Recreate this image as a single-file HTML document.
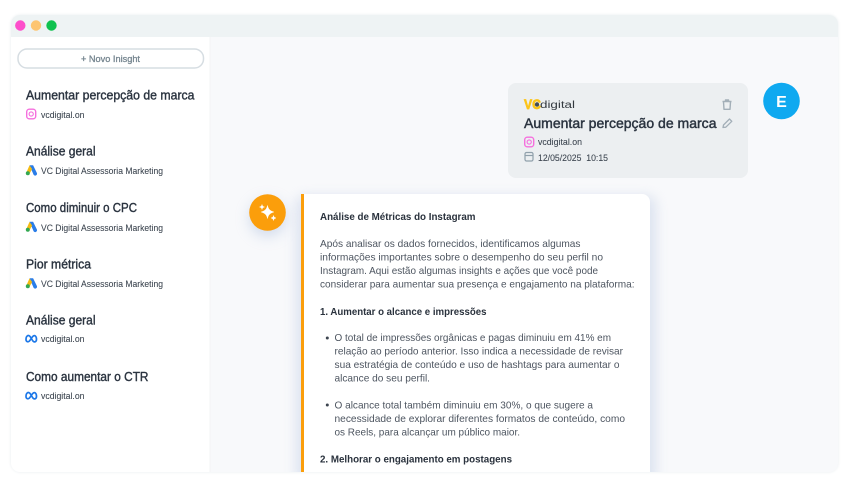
<!DOCTYPE html>
<html lang="pt">
<head>
<meta charset="utf-8">
<title>Insights</title>
<style>
html,body{margin:0;padding:0;background:#fff;width:848px;height:487px;overflow:hidden}
svg{display:block;filter:blur(.3px)}
text{font-family:"Liberation Sans","DejaVu Sans",sans-serif;white-space:pre}
.t{font-size:12.5px;fill:#2b3440;stroke:#2b3440;stroke-width:.38}
.s{font-size:9px;fill:#3a434e;stroke:#3a434e;stroke-width:.06}
.b{font-size:10.4px;fill:#4d5560}
.h{font-size:10.4px;font-weight:bold;fill:#2a323d}
</style>
</head>
<body>
<svg width="848" height="487" viewBox="0 0 848 487" xmlns="http://www.w3.org/2000/svg">
<defs>
<filter id="f" x="-10%" y="-10%" width="120%" height="120%"><feGaussianBlur stdDeviation="1.2"/></filter>
<filter id="cs" x="-15%" y="-15%" width="130%" height="130%"><feGaussianBlur stdDeviation="6"/></filter>
<filter id="as" x="-60%" y="-60%" width="220%" height="220%"><feGaussianBlur stdDeviation="7"/></filter>
<clipPath id="fc"><rect x="11" y="15" width="827" height="457" rx="9"/></clipPath>
<g id="ig" fill="none"><rect x=".7" y=".7" width="9" height="9.6" rx="2.6" stroke="#f56fde" stroke-width="1.4"/><circle cx="5.200" cy="5.500" r="2.100" stroke="#f56fde" stroke-width="1.100"/></g>
<g id="ads"><path d="M3.800 0.300 L7.400 0.300 L11.200 8 A1.900 1.900 0 0 1 7.900 9.800 Z" fill="#2a7de8"/><path d="M3.800 .4 L6.400 4 L3.600 9.200 L.6 7.600 Z" fill="#f5bb12"/><circle cx="2.100" cy="8.300" r="2" fill="#33a852"/></g>
<g id="meta" fill="none" stroke="#1d78e8" stroke-width="1.700"><path d="M1 5.400 C1 1.800 3.200 .7 4.800 2.200 C6 3.400 7 5.900 8 7.100 C9.400 8.700 11.500 7.800 11.500 5.200 C11.500 2.200 9.600 .7 8 2.200 C6.600 3.500 5.500 6 4.300 7.100 C2.900 8.300 1 7.800 1 5.400 Z"/></g>
</defs>

<rect width="848" height="487" fill="#fff"/>
<rect x="10.500" y="14.500" width="828" height="458" rx="10" fill="#eef1f3" filter="url(#f)"/>
<g clip-path="url(#fc)">
<rect x="11" y="15" width="827" height="457" fill="#f8f9fb"/>
<rect x="11" y="15" width="827" height="22" fill="#eef3f4"/>
<rect x="11" y="37" width="199" height="435" fill="#fff"/>
<rect x="209.500" y="37" width="1" height="435" fill="#f3f4f6"/>

<!-- answer card -->
<rect x="296" y="196" width="360" height="290" rx="8" fill="#b4c3e0" opacity=".4" filter="url(#cs)"/>
<path d="M302 194 H642 A8 8 0 0 1 650 202 V472 H302 Z" fill="#fff"/>
<rect x="301" y="194" width="3" height="278" fill="#fb9e0b"/>
<text class="h" x="320" y="220" textLength="155.500" lengthAdjust="spacingAndGlyphs">Análise de Métricas do Instagram</text>
<text class="b" x="320" y="247" textLength="260.500" lengthAdjust="spacingAndGlyphs">Após analisar os dados fornecidos, identificamos algumas</text>
<text class="b" x="320" y="260.500" textLength="283" lengthAdjust="spacingAndGlyphs">informações importantes sobre o desempenho do seu perfil no</text>
<text class="b" x="320" y="274" textLength="278" lengthAdjust="spacingAndGlyphs">Instagram. Aqui estão algumas insights e ações que você pode</text>
<text class="b" x="320" y="287.500" textLength="314.500" lengthAdjust="spacingAndGlyphs">considerar para aumentar sua presença e engajamento na plataforma:</text>
<text class="h" x="320" y="315" textLength="166.500" lengthAdjust="spacingAndGlyphs">1. Aumentar o alcance e impressões</text>
<circle cx="327.300" cy="338" r="1.500" fill="#3d4550"/>
<text class="b" x="334.500" y="341" textLength="276.500" lengthAdjust="spacingAndGlyphs">O total de impressões orgânicas e pagas diminuiu em 41% em</text>
<text class="b" x="334.500" y="354.500" textLength="288.500" lengthAdjust="spacingAndGlyphs">relação ao período anterior. Isso indica a necessidade de revisar</text>
<text class="b" x="334.500" y="368" textLength="285" lengthAdjust="spacingAndGlyphs">sua estratégia de conteúdo e uso de hashtags para aumentar o</text>
<text class="b" x="334.500" y="381.500" textLength="95.500" lengthAdjust="spacingAndGlyphs">alcance do seu perfil.</text>
<circle cx="327.300" cy="405" r="1.500" fill="#3d4550"/>
<text class="b" x="334.500" y="408.500" textLength="258.500" lengthAdjust="spacingAndGlyphs">O alcance total também diminuiu em 30%, o que sugere a</text>
<text class="b" x="334.500" y="422" textLength="290.500" lengthAdjust="spacingAndGlyphs">necessidade de explorar diferentes formatos de conteúdo, como</text>
<text class="b" x="334.500" y="435.500" textLength="185.500" lengthAdjust="spacingAndGlyphs">os Reels, para alcançar um público maior.</text>
<text class="h" x="320" y="462.500" textLength="192" lengthAdjust="spacingAndGlyphs">2. Melhorar o engajamento em postagens</text>
</g>

<!-- traffic lights -->
<circle cx="20.300" cy="25.500" r="5.200" fill="#fd4ecb"/>
<circle cx="36" cy="25.500" r="5.200" fill="#fdc571"/>
<circle cx="51.500" cy="25.500" r="5.200" fill="#10c24f"/>

<!-- new insight -->
<rect x="18" y="49" width="185.500" height="19" rx="9" fill="#fff" stroke="#d6dde2" stroke-width="1.500"/>
<text x="81" y="62" font-size="9" fill="#75858f" stroke="#75858f" stroke-width=".3" textLength="59" lengthAdjust="spacingAndGlyphs">+ Novo Inisght</text>

<!-- sidebar -->
<text class="t" x="26" y="99.500" textLength="168.500" lengthAdjust="spacingAndGlyphs">Aumentar percepção de marca</text>
<use href="#ig" x="26" y="108.500"/>
<text class="s" x="41" y="118" textLength="43.500" lengthAdjust="spacingAndGlyphs">vcdigital.on</text>

<text class="t" x="26" y="155.500" textLength="69.500" lengthAdjust="spacingAndGlyphs">Análise geral</text>
<use href="#ads" x="25.700" y="165"/>
<text class="s" x="41" y="174" textLength="122" lengthAdjust="spacingAndGlyphs">VC Digital Assessoria Marketing</text>

<text class="t" x="26" y="212" textLength="111" lengthAdjust="spacingAndGlyphs">Como diminuir o CPC</text>
<use href="#ads" x="25.700" y="221.500"/>
<text class="s" x="41" y="231" textLength="122" lengthAdjust="spacingAndGlyphs">VC Digital Assessoria Marketing</text>

<text class="t" x="26" y="268.500" textLength="65" lengthAdjust="spacingAndGlyphs">Pior métrica</text>
<use href="#ads" x="25.700" y="278"/>
<text class="s" x="41" y="287" textLength="122" lengthAdjust="spacingAndGlyphs">VC Digital Assessoria Marketing</text>

<text class="t" x="26" y="324.500" textLength="69.500" lengthAdjust="spacingAndGlyphs">Análise geral</text>
<use href="#meta" x="25" y="334"/>
<text class="s" x="41" y="342" textLength="43.500" lengthAdjust="spacingAndGlyphs">vcdigital.on</text>

<text class="t" x="26" y="381" textLength="122.500" lengthAdjust="spacingAndGlyphs">Como aumentar o CTR</text>
<use href="#meta" x="25" y="391"/>
<text class="s" x="41" y="399" textLength="43.500" lengthAdjust="spacingAndGlyphs">vcdigital.on</text>

<!-- user message -->
<rect x="508" y="83" width="240" height="95" rx="8" fill="#eceff1"/>
<text x="524" y="109" font-size="14" font-weight="bold" fill="#fcc419" stroke="#fcc419" stroke-width=".7" textLength="17" lengthAdjust="spacingAndGlyphs">VC</text>
<circle cx="537" cy="104.500" r="2.200" fill="#444b52"/>
<text x="540" y="108" font-size="10" fill="#33393f" textLength="35" lengthAdjust="spacingAndGlyphs">digital</text>
<g fill="none" stroke="#a3afb8" stroke-width="1.400" stroke-linejoin="round">
<path d="M722.500 101.500 H731.500 M725.500 101.500 V100 H728.500 V101.500"/>
<path d="M723.500 101.800 L724 109.300 H730 L730.500 101.800"/>
</g>
<text x="524" y="128" font-size="14" fill="#2b3440" stroke="#2b3440" stroke-width=".45" textLength="192.500" lengthAdjust="spacingAndGlyphs">Aumentar percepção de marca</text>
<g fill="none" stroke="#a3afb8" stroke-width="1.300" stroke-linejoin="round">
<path d="M723 127.500 L723.500 125 L729.500 119 L731.800 121.300 L725.800 127.200 Z"/>
</g>
<use href="#ig" x="524" y="136.500"/>
<text class="s" x="538" y="145" textLength="44" lengthAdjust="spacingAndGlyphs">vcdigital.on</text>
<g fill="none" stroke="#90a0ab" stroke-width="1.200">
<rect x="525" y="152.500" width="8" height="8.500" rx="1.500"/>
<path d="M525 155.500 H533"/>
</g>
<text class="s" x="538" y="161" textLength="70" lengthAdjust="spacingAndGlyphs">12/05/2025  10:15</text>

<!-- avatar E -->
<circle cx="781.500" cy="101" r="18.300" fill="#0fa9f0"/>
<text x="781.500" y="107" font-size="16" font-weight="bold" fill="#fff" text-anchor="middle">E</text>

<!-- AI avatar -->
<circle cx="267.500" cy="218" r="18" fill="#a9bbdc" opacity=".5" filter="url(#as)"/>
<circle cx="267.500" cy="212.500" r="18.300" fill="#fb9e0b"/>
<g fill="#fff" stroke="#fff" stroke-width=".5" stroke-linejoin="round">
<path d="M267.500 205.500 C268.300 209.300 270 210.800 273.800 212 C270 213.200 268.300 214.700 267.500 218.500 C266.700 214.700 265 213.200 261.200 212 C265 210.800 266.700 209.300 267.500 205.500 Z"/>
<path d="M262 204.500 C262.300 206 262.900 206.600 264.500 207 C262.900 207.400 262.300 208 262 209.500 C261.700 208 261.100 207.400 259.500 207 C261.100 206.600 261.700 206 262 204.500 Z"/>
<path d="M273.500 215.500 C273.800 217 274.400 217.600 276 218 C274.400 218.400 273.800 219 273.500 220.500 C273.200 219 272.600 218.400 271 218 C272.600 217.600 273.200 217 273.500 215.500 Z"/>
</g>
</svg>
</body>
</html>
